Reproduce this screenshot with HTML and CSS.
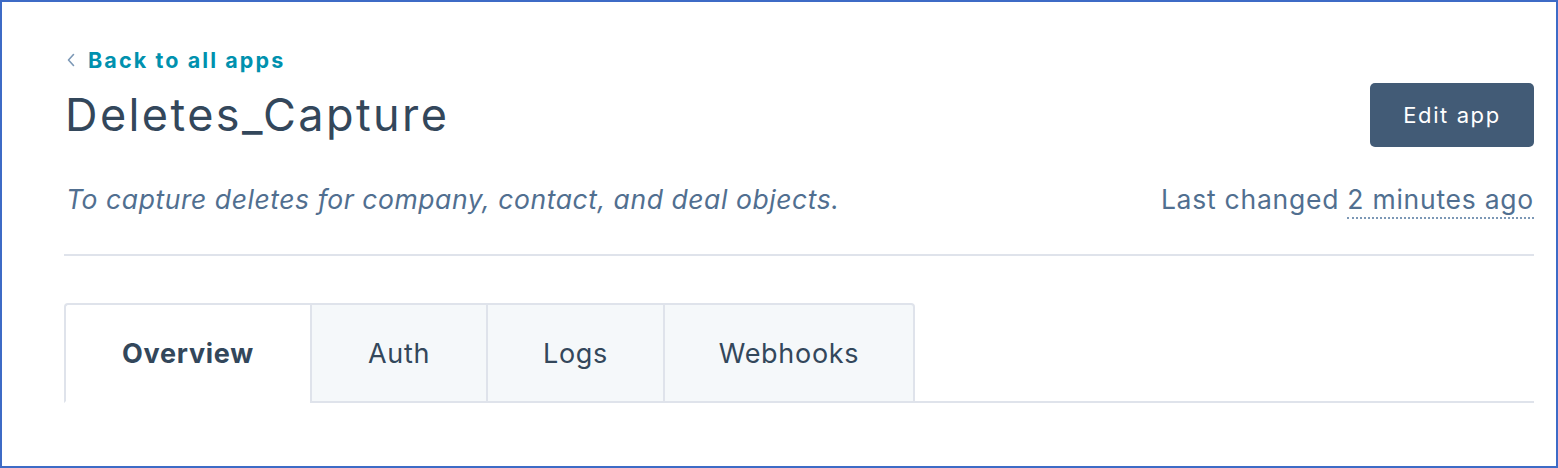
FILE: index.html
```html
<!DOCTYPE html>
<html>
<head>
<meta charset="utf-8">
<link rel="stylesheet" href="styles.css">
</head>
<body>
<div class="frame">
  <div class="page">
    <a class="back" href="#">
      <svg class="chev" width="10" height="14" viewBox="0 0 10 14"><path d="M7.5 1.5 L2.5 7 L7.5 12.5" fill="none" stroke="#7c98b6" stroke-width="1.6" stroke-linecap="round" stroke-linejoin="round"/></svg>
      <span>Back to all apps</span>
    </a>
    <div class="head">
      <h1 class="title">Deletes_Capture</h1>
      <button class="edit">Edit app</button>
    </div>
    <div class="meta">
      <p class="desc">To capture deletes for company, contact, and deal objects.</p>
      <p class="changed">Last changed <span class="ago">2 minutes ago</span></p>
    </div>
    <div class="divider"></div>
    <div class="tabs">
      <div class="tab active">Overview</div>
      <div class="tab">Auth</div>
      <div class="tab">Logs</div>
      <div class="tab last">Webhooks</div>
      <div class="tab-rest"></div>
    </div>
  </div>
</div>
</body>
</html>
```
FILE: styles.css
```css
html, body {
  margin: 0;
  padding: 0;
  background: #fff;
}
.frame {
  box-sizing: border-box;
  width: 1558px;
  height: 468px;
  border: 2px solid #3d6bc6;
  font-family: "Inter", "Open Sans", sans-serif;
  color: #33475b;
}
.page {
  padding: 46px 22px 0 62px;
}
.back {
  display: flex;
  align-items: center;
  gap: 12px;
  height: 24px;
  color: #0091ae;
  text-decoration: none;
  font-weight: 700;
  font-size: 21.5px;
  letter-spacing: 2.1px;
  padding-left: 2px;
}
.chev { flex: none; }
.head {
  display: flex;
  justify-content: space-between;
  align-items: center;
  margin-top: 11px;
  height: 64px;
}
.title {
  margin: 0;
  font-weight: 400;
  font-size: 45px;
  line-height: 64px;
  letter-spacing: 2.4px;
  color: #33475b;
  padding-left: 1px;
}
.edit {
  box-sizing: border-box;
  width: 164px;
  height: 64px;
  border: none;
  border-radius: 5px;
  background: #425b76;
  color: #fff;
  font-family: inherit;
  font-size: 22px;
  letter-spacing: 1.6px;
}
.meta {
  display: flex;
  justify-content: space-between;
  align-items: baseline;
  margin-top: 34px;
  height: 36px;
  color: #516f90;
  font-size: 26.5px;
}
.meta p { margin: 0; line-height: 36px; }
.desc { font-style: italic; padding-left: 2px; letter-spacing: 0.56px; }
.changed { letter-spacing: 0.75px; }
.ago {
  border-bottom: 2px dotted #7c98b6;
  padding-bottom: 2px;
}
.divider {
  height: 2px;
  background: #dfe3eb;
  margin-top: 37px;
}
.tabs {
  display: flex;
  margin-top: 47px;
  height: 100px;
}
.tab {
  box-sizing: border-box;
  height: 100px;
  display: flex;
  align-items: center;
  justify-content: center;
  background: #f5f8fa;
  border-top: 2px solid #dfe3eb;
  border-left: 2px solid #dfe3eb;
  border-bottom: 2px solid #dfe3eb;
  font-size: 27px;
  letter-spacing: 0.7px;
  color: #33475b;
  padding-top: 0;
}
.tab:nth-child(1) { width: 246px; border-radius: 4px 0 0 0; }
.tab:nth-child(2) { width: 176px; }
.tab:nth-child(3) { width: 177px; }
.tab:nth-child(4) { width: 252px; border-right: 2px solid #dfe3eb; border-radius: 0 4px 0 0; }
.tab.active {
  background: #fff;
  border-bottom-color: transparent;
  font-weight: 700;
}
.tab-rest {
  flex: 1;
  align-self: flex-end;
  height: 2px;
  background: #dfe3eb;
}
```
